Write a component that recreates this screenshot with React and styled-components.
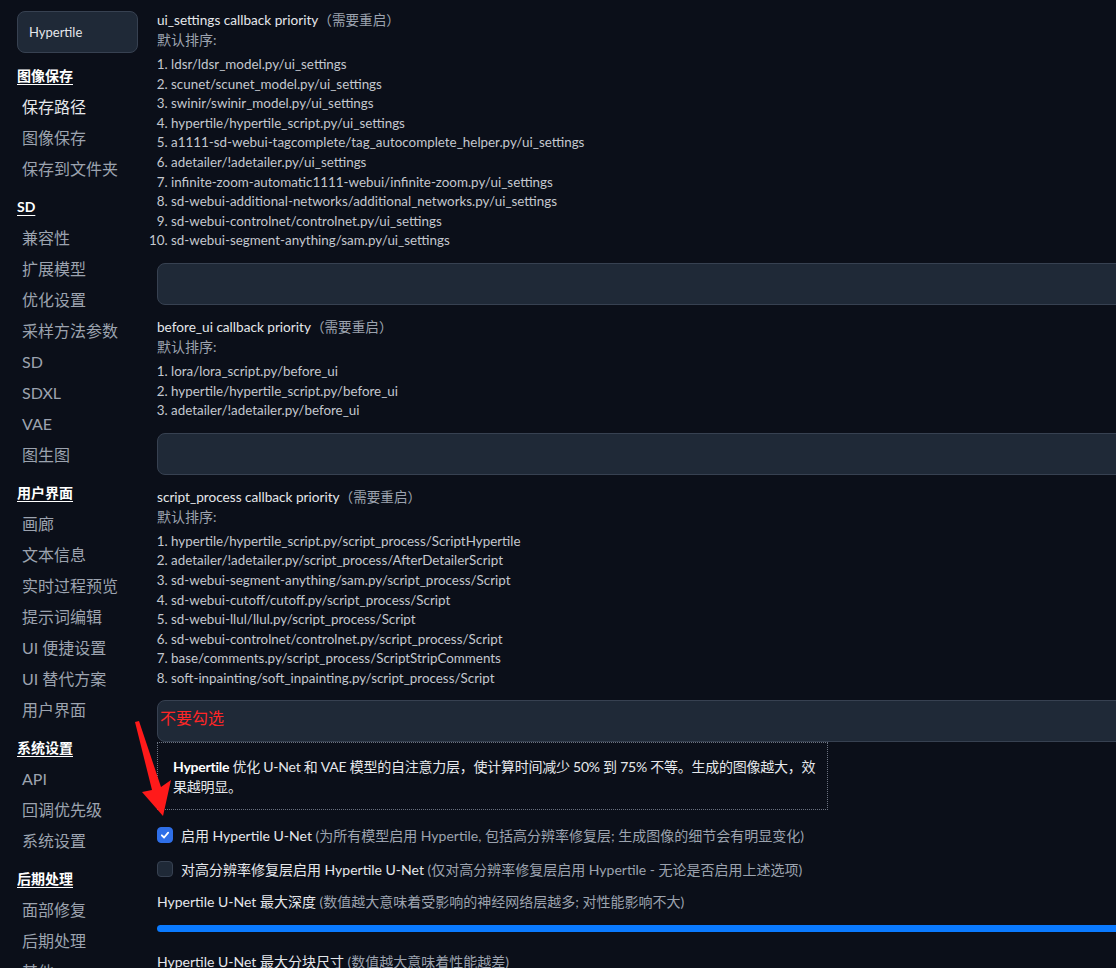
import React from 'react'
import styled, { createGlobalStyle } from 'styled-components'

const GlobalStyle = createGlobalStyle`
    html, body {
        margin: 0;
        background: #0b0f19;
        overflow: hidden;
    }
    body {
        font-family: Lato, 'Noto Sans CJK SC', sans-serif;
        color: #d1d5db;
    }
`

const nav = [
    { title: '图像保存', items: ['保存路径', '图像保存', '保存到文件夹'] },
    { title: 'SD', items: ['兼容性', '扩展模型', '优化设置', '采样方法参数', 'SD', 'SDXL', 'VAE', '图生图'] },
    { title: '用户界面', items: ['画廊', '文本信息', '实时过程预览', '提示词编辑', 'UI 便捷设置', 'UI 替代方案', '用户界面'] },
    { title: '系统设置', items: ['API', '回调优先级', '系统设置'] },
    { title: '后期处理', items: ['面部修复', '后期处理', '其他'] },
]

const callbacks = [
    {
        name: 'ui_settings callback priority',
        list: [
            'ldsr/ldsr_model.py/ui_settings',
            'scunet/scunet_model.py/ui_settings',
            'swinir/swinir_model.py/ui_settings',
            'hypertile/hypertile_script.py/ui_settings',
            'a1111-sd-webui-tagcomplete/tag_autocomplete_helper.py/ui_settings',
            'adetailer/!adetailer.py/ui_settings',
            'infinite-zoom-automatic1111-webui/infinite-zoom.py/ui_settings',
            'sd-webui-additional-networks/additional_networks.py/ui_settings',
            'sd-webui-controlnet/controlnet.py/ui_settings',
            'sd-webui-segment-anything/sam.py/ui_settings',
        ],
    },
    {
        name: 'before_ui callback priority',
        list: ['lora/lora_script.py/before_ui', 'hypertile/hypertile_script.py/before_ui', 'adetailer/!adetailer.py/before_ui'],
    },
    {
        name: 'script_process callback priority',
        note: '不要勾选',
        list: [
            'hypertile/hypertile_script.py/script_process/ScriptHypertile',
            'adetailer/!adetailer.py/script_process/AfterDetailerScript',
            'sd-webui-segment-anything/sam.py/script_process/Script',
            'sd-webui-cutoff/cutoff.py/script_process/Script',
            'sd-webui-llul/llul.py/script_process/Script',
            'sd-webui-controlnet/controlnet.py/script_process/Script',
            'base/comments.py/script_process/ScriptStripComments',
            'soft-inpainting/soft_inpainting.py/script_process/Script',
        ],
    },
]

export default function App() {
    return (
        <Page>
            <GlobalStyle />
            <Sidebar>
                <Search>Hypertile</Search>
                {nav.map((s) => (
                    <Section key={s.title}>
                        <SectionTitle>{s.title}</SectionTitle>
                        {s.items.map((it) => (
                            <NavItem key={it} $active={it === '保存路径'}>
                                {it}
                            </NavItem>
                        ))}
                    </Section>
                ))}
            </Sidebar>
            <Main>
                {callbacks.map((c, i) => (
                    <Block key={c.name} $last={i === callbacks.length - 1}>
                        <Label>
                            {c.name}
                            <Muted>（需要重启）</Muted>
                        </Label>
                        <Sub>默认排序:</Sub>
                        <List>
                            {c.list.map((l) => (
                                <li key={l}>{l}</li>
                            ))}
                        </List>
                        <TextBox>{c.note && <Warn>{c.note}</Warn>}</TextBox>
                    </Block>
                ))}
                <Info>
                    <b>Hypertile</b> 优化 U-Net 和 VAE 模型的自注意力层，使计算时间减少 50% 到 75% 不等。生成的图像越大，效果越明显。
                </Info>
                <Checks>
                    <CheckRow>
                        <Box $checked>
                            <svg width="10" height="10" viewBox="0 0 12 12">
                                <path d="M2.2 6.4 L4.9 9 L9.8 3.2" fill="none" stroke="#fff" strokeWidth="2.2" strokeLinecap="round" strokeLinejoin="round" />
                            </svg>
                        </Box>
                        <span>
                            启用 Hypertile U-Net <Muted>(为所有模型启用 Hypertile, 包括高分辨率修复层; 生成图像的细节会有明显变化)</Muted>
                        </span>
                    </CheckRow>
                    <CheckRow>
                        <Box />
                        <span>
                            对高分辨率修复层启用 Hypertile U-Net <Muted>(仅对高分辨率修复层启用 Hypertile - 无论是否启用上述选项)</Muted>
                        </span>
                    </CheckRow>
                </Checks>
                <SliderLabel>
                    Hypertile U-Net 最大深度 <Muted>(数值越大意味着受影响的神经网络层越多; 对性能影响不大)</Muted>
                </SliderLabel>
                <Track />
                <SliderLabel>
                    Hypertile U-Net 最大分块尺寸 <Muted>(数值越大意味着性能越差)</Muted>
                </SliderLabel>
            </Main>
            <Arrow viewBox="0 0 60 110" width="60" height="110">
                <polygon points="1,2 5,1 27,67 37,60 29,96 8,72 18,70" fill="#ff1a1a" />
            </Arrow>
        </Page>
    )
}

const Page = styled.div`
    position: relative;
    display: flex;
    width: 1400px;
    min-height: 968px;
`

const Sidebar = styled.nav`
    width: 121px;
    flex-shrink: 0;
    padding: 11px 0 0 17px;
`

const Search = styled.div`
    height: 42px;
    box-sizing: border-box;
    width: 121px;
    display: flex;
    align-items: center;
    padding-left: 11px;
    background: #1f2937;
    border: 1px solid #374151;
    border-radius: 8px;
    color: #e5e7eb;
    font-size: 13px;
    margin-bottom: 8px;
`

const Section = styled.div`
    & + & {
        margin-top: 8px;
    }
`

const SectionTitle = styled.div`
    line-height: 30px;
    font-size: 14px;
    font-weight: 700;
    color: #fff;
    text-decoration: underline;
    text-underline-offset: 3px;
`

const NavItem = styled.div`
    line-height: 31px;
    font-size: 16px;
    padding-left: 5px;
    color: ${({ $active }) => ($active ? '#e5e7eb' : '#9ca3af')};
    white-space: nowrap;
`

const Main = styled.main`
    flex: 1;
    padding: 10px 0 0 19px;
`

const Block = styled.div`
    margin-bottom: ${({ $last }) => ($last ? '0' : '12px')};
`

const Label = styled.div`
    font-size: 13.6px;
    line-height: 20px;
    color: #e5e7eb;
`

const Muted = styled.span`
    color: #9ca3af;
`

const Sub = styled.div`
    font-size: 14px;
    line-height: 20px;
    color: #9ca3af;
`

const List = styled.ol`
    margin: 5px 0 12px;
    padding: 0 0 0 14px;
    font-size: 13.4px;
    line-height: 19.6px;
    color: #c4c8cf;
    li::marker {
        color: #c4c8cf;
    }
`

const TextBox = styled.div`
    height: 42px;
    box-sizing: border-box;
    background: #1f2937;
    border: 1px solid #374151;
    border-radius: 8px;
    padding: 7px 2px;
`

const Warn = styled.span`
    color: #ff2626;
    font-size: 16px;
    line-height: 20px;
`

const Info = styled.div`
    width: 671px;
    box-sizing: border-box;
    border: 1px dotted #6b7280;
    padding: 14px 4px 13px 15px;
    font-size: 14px;
    letter-spacing: -0.25px;
    line-height: 19.5px;
    color: #e5e7eb;
    b {
        color: #fff;
    }
`

const Checks = styled.div`
    margin-top: 8px;
`

const CheckRow = styled.label`
    display: flex;
    align-items: center;
    gap: 8px;
    height: 34px;
    font-size: 14px;
    color: #e5e7eb;
`

const Box = styled.span`
    width: 16px;
    height: 16px;
    box-sizing: border-box;
    border-radius: 4px;
    display: flex;
    align-items: center;
    justify-content: center;
    background: ${({ $checked }) => ($checked ? '#2f6fe8' : '#1f2937')};
    border: 1px solid ${({ $checked }) => ($checked ? '#2f6fe8' : '#374151')};
`

const SliderLabel = styled.div`
    font-size: 14px;
    line-height: 20px;
    color: #e5e7eb;
    margin-top: 6px;
`

const Track = styled.div`
    height: 7px;
    margin: 13px 0 20px;
    background: #0a7aff;
    border-radius: 4px 0 0 4px;
`

const Arrow = styled.svg`
    position: absolute;
    left: 134px;
    top: 720px;
`
